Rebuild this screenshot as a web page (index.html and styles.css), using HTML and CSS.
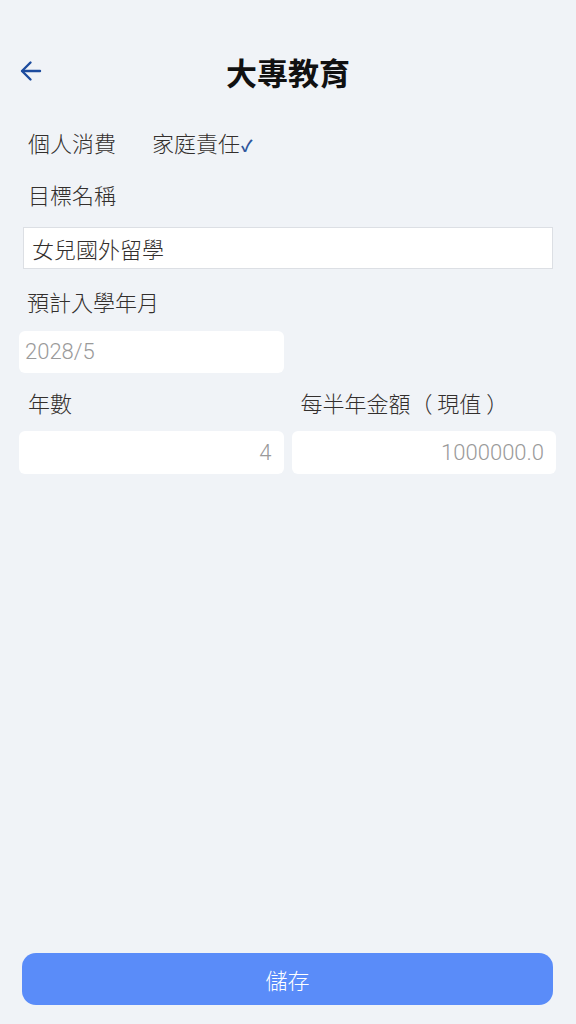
FILE: index.html
```html
<!DOCTYPE html>
<html lang="zh-Hant">
<head>
  <meta charset="UTF-8">
  <meta name="viewport" content="width=device-width, initial-scale=1.0">
  <title>大專教育</title>
  <link rel="stylesheet" href="styles.css">
</head>
<body>
  <div class="page">
    <div class="header">
      <button class="back-btn" aria-label="返回">
        <svg width="22" height="22" viewBox="0 0 22 22" fill="none" stroke="#1d4c9e" stroke-width="2.4" stroke-linecap="round" stroke-linejoin="round">
          <path d="M20 11H2.5"/>
          <path d="M10.5 2.5L2 11l8.5 8.5"/>
        </svg>
      </button>
      <h1>大專教育</h1>
      <div></div>
    </div>

    <div class="category-row">
      <span class="category">個人消費</span>
      <span class="category selected">家庭責任<span class="check">✓</span></span>
    </div>

    <div class="label">目標名稱</div>
    <div class="text-input">女兒國外留學</div>

    <div class="label label-date">預計入學年月</div>
    <div class="field date-field">2028/5</div>

    <div class="two-col">
      <div class="col">
        <div class="label">年數</div>
        <div class="field num">4</div>
      </div>
      <div class="col">
        <div class="label">每半年金額（ 現值 ）</div>
        <div class="field num">1000000.0</div>
      </div>
    </div>

    <button class="save-btn">儲存</button>
  </div>
</body>
</html>
```

FILE: styles.css
```css
* {
  box-sizing: border-box;
}

body {
  margin: 0;
  background: #f0f3f7;
  font-family: "Noto Sans CJK TC", "Noto Sans", sans-serif;
  font-weight: 300;
  color: #332f2d;
}

.page {
  min-height: 100vh;
  display: flex;
  flex-direction: column;
  padding-bottom: 19px;
}

.header {
  display: grid;
  grid-template-columns: 1fr auto 1fr;
  align-items: center;
  height: 56px;
  margin-top: 43px;
}

.back-btn {
  justify-self: start;
  margin-left: 20px;
  padding: 0;
  border: none;
  background: none;
  display: flex;
}

h1 {
  margin: 0;
  font-size: 31px;
  font-weight: bold;
  color: #111;
  line-height: 1;
}

.category-row {
  display: flex;
  gap: 36px;
  margin-top: 28px;
  padding-left: 28px;
  font-size: 22px;
  line-height: 30px;
}

.check {
  color: #2d559b;
  font-size: 16px;
  font-weight: bold;
  margin-left: 1px;
}

.label {
  font-size: 22px;
  line-height: 30px;
  padding-left: 28px;
  margin-top: 19px;
}

.text-input {
  margin: 18px 23px 0 23px;
  height: 42px;
  background: #fff;
  border: 1px solid #dcdfe4;
  padding: 0 8px;
  font-size: 22px;
  line-height: 40px;
}

.label-date {
  margin-top: 17px;
  padding-left: 27px;
}

.field {
  height: 42px;
  background: #fff;
  border-radius: 6px;
  font-family: Roboto, "Noto Sans CJK TC", sans-serif;
  font-size: 22px;
  line-height: 42px;
  color: #9a9a9a;
  padding: 0 12px 0 6px;
}

.date-field {
  margin: 15px 0 0 19px;
  width: 265px;
}

.two-col {
  display: grid;
  grid-template-columns: 1fr 1fr;
  gap: 8px;
  margin: 14px 20px 0 19px;
}

.two-col .label {
  margin-top: 0;
  padding-left: 9px;
}

.two-col .field {
  margin-top: 14px;
  height: 43px;
  line-height: 43px;
}

.num {
  text-align: right;
}

.save-btn {
  margin: auto 23px 0 22px;
  height: 52px;
  border: none;
  border-radius: 14px;
  background: #5a8cf9;
  color: #fff;
  font-family: inherit;
  font-weight: 300;
  font-size: 22px;
}
```
